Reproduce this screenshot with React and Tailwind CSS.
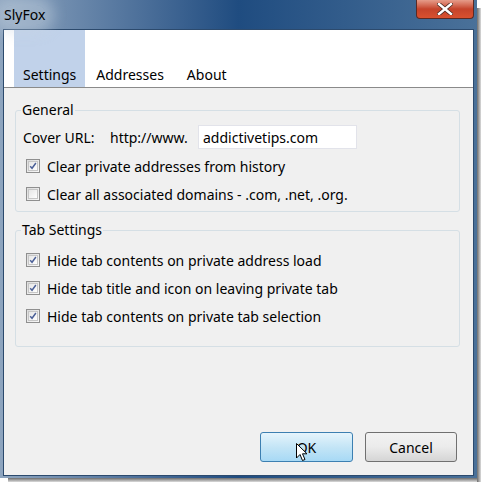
import React from 'react';

const Check = ({ checked }) => (
  <span className="flex h-[14px] w-[14px] shrink-0 items-center justify-center border border-[#8f8f8f] bg-gradient-to-br from-[#dcdcdc] to-[#f8f8f8]">
    <span className="flex h-[10px] w-[10px] items-center justify-center border border-[#c6c6c6] bg-gradient-to-br from-[#e6e6e6] to-[#ffffff]">
      {checked && (
        <svg width="10" height="10" viewBox="0 0 10 10">
          <path d="M1.5 5.2 L3.8 7.8 L8.6 1.2" fill="none" stroke="#4a5f97" strokeWidth="1.8" />
        </svg>
      )}
    </span>
  </span>
);

const CheckRow = ({ checked, label }) => (
  <div className="flex h-[28px] items-center gap-[7px] pl-[10px]">
    <Check checked={checked} />
    <span>{label}</span>
  </div>
);

const Group = ({ title, children, className }) => (
  <div className={`relative ml-[11px] mr-[13px] rounded-[3px] border border-[#d5dfe5] ${className}`}>
    <span className="absolute left-[5px] top-[-11px] bg-[#f0f0f0] px-[1px] leading-[20px]">{title}</span>
    {children}
  </div>
);

export default function App() {
  return (
    <div
      className="relative h-[482px] w-[481px] overflow-hidden bg-white text-[14px] text-black"
      style={{ fontFamily: '"Noto Sans", "Open Sans", sans-serif' }}
    >
      {/* frame */}
      <div className="flex h-[478px] w-[477px] flex-col bg-gradient-to-r from-[#8ea5bf] via-[#1f4c80] to-[#4a7199]">
        {/* title bar */}
        <div className="relative flex h-[29px] items-center pl-[3px]">
          <span className="rounded-full bg-[#c7d4e2]/40 px-[1px] leading-[20px] shadow-[0_0_14px_8px_rgba(199,212,226,0.45)]">SlyFox</span>
          <div className="absolute right-[3px] top-0 flex h-[19px] w-[58px] items-center justify-center rounded-b-[4px] border border-t-0 border-[#5b2a24] bg-gradient-to-b from-[#e59c8a] via-[#c5432b] to-[#d8512f]">
            <svg width="16" height="12" viewBox="0 0 16 12">
              <path d="M2 1 L14 11 M14 1 L2 11" stroke="#4a2a22" strokeWidth="4" strokeLinecap="square" />
              <path d="M2 1 L14 11 M14 1 L2 11" stroke="#ffffff" strokeWidth="2.4" strokeLinecap="square" />
            </svg>
          </div>
        </div>

        {/* client */}
        <div className="mx-[3px] mb-[2px] flex flex-1 flex-col border border-[#2c4a6d] bg-[#f0f0f0]">
          {/* tabs */}
          <div className="flex h-[58px] items-end border-b border-[#8a8a8a] bg-white pl-[10px]">
            <div className="flex h-full items-end bg-[#c1d2ea] px-[9px] pb-[2px]">Settings</div>
            <div className="px-[11px] pb-[2px]">Addresses</div>
            <div className="px-[12px] pb-[2px]">About</div>
          </div>

          <div className="pt-[22px]">
            <Group title="General" className="h-[102px] pt-[13px]">
              <div className="flex h-[26px] items-center pl-[7px]">
                <span className="w-[87px]">Cover URL:</span>
                <span className="w-[88px]">http://www.</span>
                <div className="flex h-[24px] w-[159px] items-center border border-[#e2e3ea] bg-white pl-[4px]">addictivetips.com</div>
              </div>
              <div className="pt-[2px]">
                <CheckRow checked label="Clear private addresses from history" />
                <CheckRow label="Clear all associated domains - .com, .net, .org." />
              </div>
            </Group>

            <Group title="Tab Settings" className="mt-[18px] h-[117px] pt-[15px]">
              <CheckRow checked label="Hide tab contents on private address load" />
              <CheckRow checked label="Hide tab title and icon on leaving private tab" />
              <CheckRow checked label="Hide tab contents on private tab selection" />
            </Group>
          </div>

          <div className="mt-auto flex justify-end gap-[12px] pb-[13px] pr-[16px]">
            <button className="relative h-[30px] w-[93px] rounded-[3px] border border-[#3c7fb1] bg-gradient-to-b from-[#e5f4fc] via-[#c4e5f6] to-[#a7d9f5]">
              OK
              <svg className="absolute left-[35px] top-[10px]" width="12" height="19" viewBox="0 0 12 19">
                <path d="M0.5 0.5 L0.5 15 L4 11.5 L6.5 17.5 L9 16.5 L6.5 10.8 L11 10.8 Z" fill="#ffffff" stroke="#000000" strokeWidth="1" />
              </svg>
            </button>
            <button className="h-[30px] w-[92px] rounded-[3px] border border-[#707070] bg-gradient-to-b from-[#f2f2f2] via-[#ebebeb] to-[#d5d5d5]">Cancel</button>
          </div>
        </div>
      </div>
      {/* shadow */}
      <div className="absolute bottom-0 left-[8px] h-[4px] w-[473px] bg-gradient-to-b from-[#6e6e6e] to-[#dcdcdc]" />
      <div className="absolute right-0 top-[8px] h-[474px] w-[4px] bg-gradient-to-r from-[#6e6e6e] to-[#dcdcdc]" />
    </div>
  );
}
